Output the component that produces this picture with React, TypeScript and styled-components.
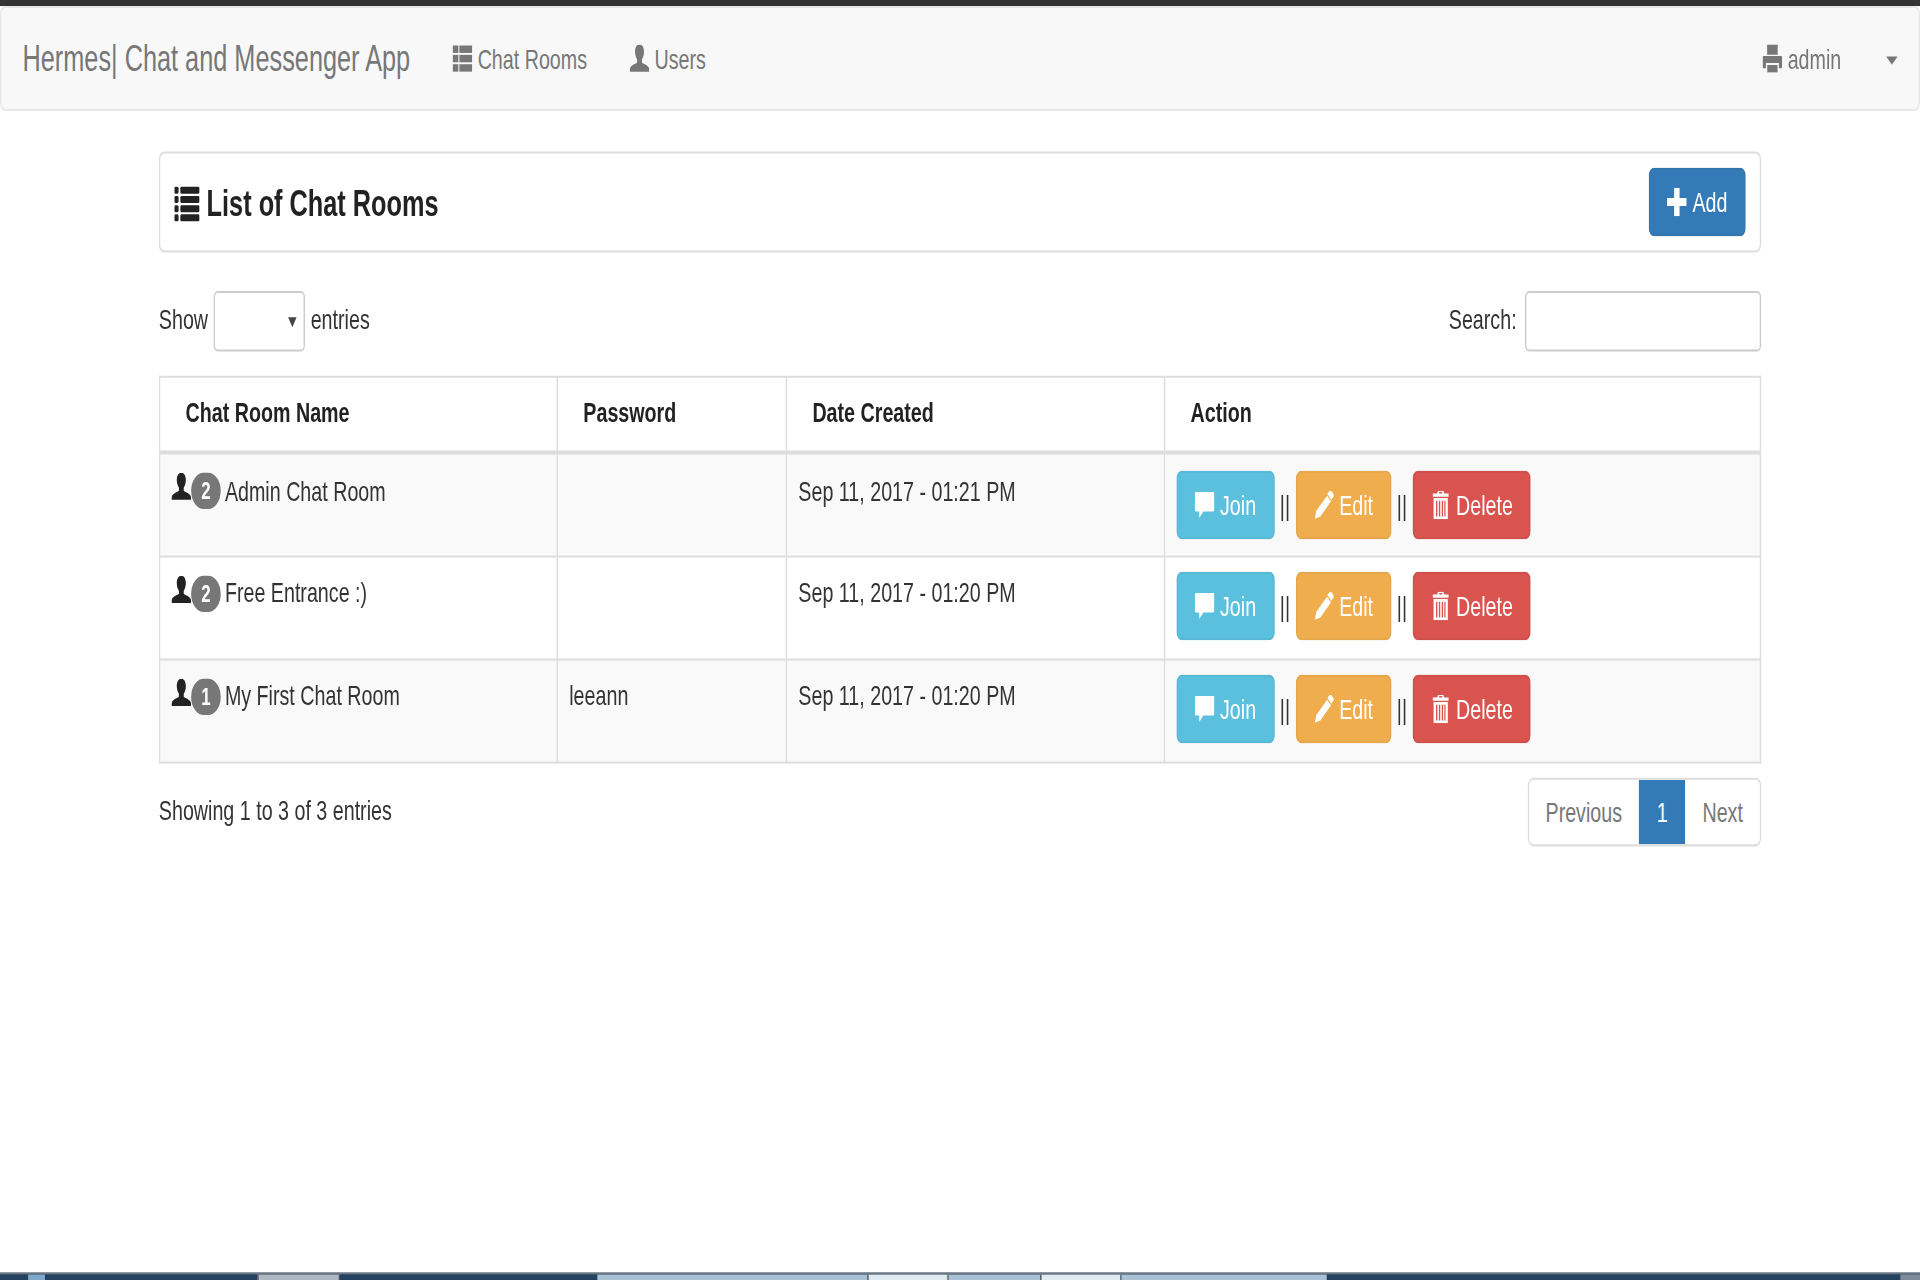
import { ReactNode } from 'react';
import styled, { createGlobalStyle } from 'styled-components';

// the reference is a 1366 wide page stretched to fill 1920x1280, so the page is laid out
// at its own size and the root carries that one stretch
const GlobalStyle = createGlobalStyle`
  html, body {
    margin: 0;
    padding: 0;
    height: 1280px;
    background: #fff;
  }
  * {
    box-sizing: border-box;
  }
`;

const Page = styled.div`
  width: 1366px;
  height: 633.7px;
  display: flex;
  flex-direction: column;
  transform: scale(1.40556, 2.02);
  transform-origin: 0 0;
  filter: blur(0.3px);
  font-family: 'Liberation Sans', Arial, sans-serif;
  font-size: 14px;
  line-height: 20px;
  color: #333;
`;

const TopBar = styled.div`
  height: 3px;
  flex: none;
  background: #333;
`;

const Navbar = styled.nav`
  flex: none;
  height: 52px;
  display: flex;
  align-items: center;
  background: #f8f8f8;
  border: 1px solid #e7e7e7;
  border-radius: 4px;
  color: #777;
  margin-bottom: 20px;
`;

const Brand = styled.span`
  padding: 0 15px;
  font-size: 18px;
`;

const NavLink = styled.span`
  display: inline-flex;
  align-items: center;
  gap: 4px;
  padding: 0 15px 1px;
`;

const Spacer = styled.div`
  flex: 1;
`;

const Caret = styled.span`
  width: 0;
  height: 0;
  margin: 1px 15px 0 17px;
  border-top: 4px solid #777;
  border-left: 4px solid transparent;
  border-right: 4px solid transparent;
`;

const Container = styled.main`
  width: 1140px;
  margin: 0 auto 0 113px;
  flex: none;
`;

const TitlePanel = styled.section`
  display: flex;
  align-items: center;
  justify-content: space-between;
  height: 49.5px;
  padding: 7px 10px;
  border: 1px solid #ddd;
  border-radius: 4px;
  margin-bottom: 19.5px;
`;

const Title = styled.h4`
  display: inline-flex;
  align-items: center;
  gap: 5px;
  margin: 1.5px 0 0;
  font-size: 18px;
  font-weight: 700;
  color: #222;
`;

const Controls = styled.div`
  display: flex;
  justify-content: space-between;
  align-items: center;
  height: 30px;
  margin-bottom: 11.6px;
`;

const ControlLabel = styled.label<{ $gap: number }>`
  display: inline-flex;
  align-items: center;
  gap: ${({ $gap }) => $gap}px;
  padding-bottom: 2px;
`;

const SelectWrap = styled.span`
  position: relative;
  display: inline-block;
  width: 65px;
  height: 30px;
  margin-bottom: -2px;

  &::after {
    content: '';
    position: absolute;
    right: 6px;
    top: 13px;
    border-top: 5px solid #444;
    border-left: 3px solid transparent;
    border-right: 3px solid transparent;
  }
`;

const EntriesSelect = styled.select`
  appearance: none;
  width: 100%;
  height: 100%;
  background: #fff;
  border: 1px solid #ccc;
  border-radius: 3px;
`;

const SearchInput = styled.input`
  width: 168px;
  height: 30px;
  margin-bottom: -2px;
  background: #fff;
  border: 1px solid #ccc;
  border-radius: 3px;
`;

const Table = styled.table`
  width: 1140px;
  table-layout: fixed;
  border-collapse: collapse;
  border: 1px solid #ddd;
`;

const HeadCell = styled.th`
  height: 38px;
  padding: 7px 8px 8px 18px;
  border: 1px solid #ddd;
  border-bottom: 2px solid #ddd;
  text-align: left;
  vertical-align: top;
  font-weight: 700;
  color: #222;
`;

const Row = styled.tr<{ $striped: boolean }>`
  background: ${({ $striped }) => ($striped ? '#f9f9f9' : '#fff')};
`;

const Cell = styled.td`
  height: 51px;
  padding: 7.5px 8px;
  border: 1px solid #ddd;
  vertical-align: top;
`;

const RoomName = styled.div`
  display: flex;
  align-items: flex-start;
`;

const Badge = styled.span`
  flex: none;
  min-width: 21px;
  height: 18px;
  margin: 1.5px 3px 0 0;
  padding: 3px 7px;
  border-radius: 10px;
  background: #777;
  color: #fff;
  font-size: 12px;
  font-weight: 700;
  line-height: 12px;
  text-align: center;
`;

const UserGlyph = styled.span`
  flex: none;
  display: inline-flex;
  width: 14px;
  margin-top: 1.5px;
  color: #222;
`;

const Actions = styled.div`
  display: flex;
  align-items: center;
  height: 34px;
  white-space: pre;
`;

const Button = styled.button<{ $color: string }>`
  display: inline-flex;
  align-items: center;
  gap: 4px;
  height: 34px;
  padding: 0 12px;
  border: 1px solid rgba(0, 0, 0, 0.04);
  border-radius: 4px;
  background: ${({ $color }) => $color};
  color: #fff;
  font: inherit;
`;

const Footer = styled.div`
  display: flex;
  justify-content: space-between;
  align-items: flex-start;
  margin-top: 7.5px;
`;

const Info = styled.div`
  padding-top: 6px;
`;

const Pagination = styled.div`
  display: flex;
  height: 34px;
  border: 1px solid #ddd;
  border-radius: 4px;
  overflow: hidden;
  color: #777;
`;

const PageItem = styled.span<{ $active?: boolean }>`
  display: flex;
  align-items: center;
  padding: 0 ${({ $active }) => ($active ? '12.7px' : '12px')};
  background: ${({ $active }) => ($active ? '#337ab7' : '#fff')};
  color: ${({ $active }) => ($active ? '#fff' : '#777')};
`;

const Taskbar = styled.div`
  margin-top: auto;
  height: 4px;
  flex: none;
  display: flex;
  border-top: 1px solid #6b7681;
  background: #1f3d5c;
`;

type TaskTone = 'dark' | 'light' | 'tab' | 'lightTab' | 'orb' | 'end';

const TaskSegment = styled.div<{ $width: number; $tone: TaskTone }>`
  flex: ${({ $width }) => ($width ? `0 0 ${$width}px` : '1')};
  background: ${({ $tone }) =>
    ({
      dark: '#24415f',
      light: '#a9c2d6',
      tab: '#aeb8c2',
      lightTab: '#dfe9f0',
      orb: '#7fa9cc',
      end: '#7d8a97',
    })[$tone]};
  ${({ $tone }) => ($tone === 'tab' || $tone === 'lightTab' ? 'border: solid #4a5560; border-width: 0 1px;' : '')}
`;

const Glyph = ({ size = 14, children }: { size?: number; children: ReactNode }) => (
  <svg width={size} height={size} viewBox="0.5 0.5 13 13" fill="currentColor" style={{ flex: 'none' }}>
    {children}
  </svg>
);

const ThListIcon = () => (
  <Glyph>
    <rect x="0.5" y="1" width="3.8" height="3.4" />
    <rect x="5" y="1" width="8.5" height="3.4" />
    <rect x="0.5" y="5.3" width="3.8" height="3.4" />
    <rect x="5" y="5.3" width="8.5" height="3.4" />
    <rect x="0.5" y="9.6" width="3.8" height="3.4" />
    <rect x="5" y="9.6" width="8.5" height="3.4" />
  </Glyph>
);

const ListIcon = ({ size = 14 }: { size?: number }) => (
  <Glyph size={size}>
    {[0.8, 4.1, 7.4, 10.7].map((y) => (
      <g key={y}>
        <rect x="0.5" y={y} width="2.2" height="2.5" rx="0.6" />
        <rect x="3.6" y={y} width="9.9" height="2.5" rx="0.6" />
      </g>
    ))}
  </Glyph>
);

const UserIcon = () => (
  <Glyph>
    <path d="M7 0.5c-1.9 0-3 1.5-3 3.3 0 1.5.6 2.8 1.4 3.6v1.4c-1.5.8-4 1.3-4.6 2.4-.3.6-.3 1.3-.3 1.8h13c0-.5 0-1.2-.3-1.8-.6-1.1-3.1-1.6-4.6-2.4V7.4C9.4 6.6 10 5.3 10 3.8c0-1.8-1.1-3.3-3-3.3z" />
  </Glyph>
);

const PrintIcon = () => (
  <Glyph>
    <path d="M3.5 0.5h7v4.7h-7z" />
    <path d="M1.2 5.8h11.6c.4 0 .7.3.7.7v4.3c0 .4-.3.7-.7.7h-1.5V9H2.7v2.5H1.2c-.4 0-.7-.3-.7-.7V6.5c0-.4.3-.7.7-.7z" />
    <path d="M3.6 10h6.8v3.4H3.6z" />
  </Glyph>
);

const PlusIcon = () => (
  <Glyph>
    <path d="M5.2.5h3.6v4.7h4.7v3.6H8.8v4.7H5.2V8.8H.5V5.2h4.7z" />
  </Glyph>
);

const CommentIcon = () => (
  <Glyph>
    <path d="M1.3 1h11.4c.5 0 .8.3.8.8v7.4c0 .5-.3.8-.8.8H6.2l-2.7 3V10H1.3c-.5 0-.8-.3-.8-.8V1.8c0-.5.3-.8.8-.8z" />
  </Glyph>
);

const PencilIcon = () => (
  <Glyph>
    <path d="M10.6.6c.4-.3.9-.3 1.2 0l1.4 1.4c.3.3.3.8 0 1.2l-1.4 1.4-2.6-2.6zM9 2.7l2.6 2.6-7 7-3.7 1 1-3.6z" />
  </Glyph>
);

const TrashIcon = () => (
  <Glyph>
    <path d="M5.2.5h3.6l.5 1.2h2.9v1.5H1.8V1.7h2.9zM6 1v.7h2V1z" fillRule="evenodd" />
    <path
      fillRule="evenodd"
      d="M2.3 3.8h9.4v9.7H2.3zM3.9 5v7.3h.9V5zM5.8 5v7.3h.9V5zM7.7 5v7.3h.9V5zM9.4 5v7.3h.8V5z"
    />
  </Glyph>
);

interface Room {
  name: string;
  members: number;
  password: string;
  created: string;
}

const rooms: Room[] = [
  { name: 'Admin Chat Room', members: 2, password: '', created: 'Sep 11, 2017 - 01:21 PM' },
  { name: 'Free Entrance :)', members: 2, password: '', created: 'Sep 11, 2017 - 01:20 PM' },
  { name: 'My First Chat Room', members: 1, password: 'leeann', created: 'Sep 11, 2017 - 01:20 PM' },
];

const App = () => (
  <>
    <GlobalStyle />
    <Page>
      <TopBar />
      <Navbar>
        <Brand>Hermes| Chat and Messenger App</Brand>
        <NavLink>
          <ThListIcon />
          Chat Rooms
        </NavLink>
        <NavLink>
          <UserIcon />
          Users
        </NavLink>
        <Spacer />
        <NavLink>
          <PrintIcon />
          admin
        </NavLink>
        <Caret />
      </Navbar>

      <Container>
        <TitlePanel>
          <Title>
            <ListIcon size={18} />
            List of Chat Rooms
          </Title>
          <Button $color="#337ab7">
            <PlusIcon />
            Add
          </Button>
        </TitlePanel>

        <Controls>
          <ControlLabel $gap={4}>
            Show
            <SelectWrap>
              <EntriesSelect aria-label="entries" />
            </SelectWrap>
            entries
          </ControlLabel>
          <ControlLabel $gap={6}>
            Search:
            <SearchInput />
          </ControlLabel>
        </Controls>

        <Table>
          <colgroup>
            <col style={{ width: 283 }} />
            <col style={{ width: 163 }} />
            <col style={{ width: 269 }} />
            <col />
          </colgroup>
          <thead>
            <tr>
              <HeadCell>Chat Room Name</HeadCell>
              <HeadCell>Password</HeadCell>
              <HeadCell>Date Created</HeadCell>
              <HeadCell>Action</HeadCell>
            </tr>
          </thead>
          <tbody>
            {rooms.map((room, i) => (
              <Row key={room.name} $striped={i !== 1}>
                <Cell>
                  <RoomName>
                    <UserGlyph>
                      <UserIcon />
                    </UserGlyph>
                    <Badge>{room.members}</Badge>
                    {room.name}
                  </RoomName>
                </Cell>
                <Cell>{room.password}</Cell>
                <Cell>{room.created}</Cell>
                <Cell>
                  <Actions>
                    <Button $color="#5bc0de">
                      <CommentIcon />
                      Join
                    </Button>
                    {' || '}
                    <Button $color="#f0ad4e">
                      <PencilIcon />
                      Edit
                    </Button>
                    {' || '}
                    <Button $color="#d9534f">
                      <TrashIcon />
                      Delete
                    </Button>
                  </Actions>
                </Cell>
              </Row>
            ))}
          </tbody>
        </Table>

        <Footer>
          <Info>Showing 1 to 3 of 3 entries</Info>
          <Pagination>
            <PageItem>Previous</PageItem>
            <PageItem $active>1</PageItem>
            <PageItem>Next</PageItem>
          </Pagination>
        </Footer>
      </Container>

      <Taskbar>
        <TaskSegment $width={20} $tone="dark" />
        <TaskSegment $width={12} $tone="orb" />
        <TaskSegment $width={151} $tone="dark" />
        <TaskSegment $width={59} $tone="tab" />
        <TaskSegment $width={183} $tone="dark" />
        <TaskSegment $width={192} $tone="light" />
        <TaskSegment $width={58} $tone="lightTab" />
        <TaskSegment $width={65} $tone="light" />
        <TaskSegment $width={58} $tone="lightTab" />
        <TaskSegment $width={146} $tone="light" />
        <TaskSegment $width={0} $tone="dark" />
        <TaskSegment $width={14} $tone="end" />
      </Taskbar>
    </Page>
  </>
);

export default App;
